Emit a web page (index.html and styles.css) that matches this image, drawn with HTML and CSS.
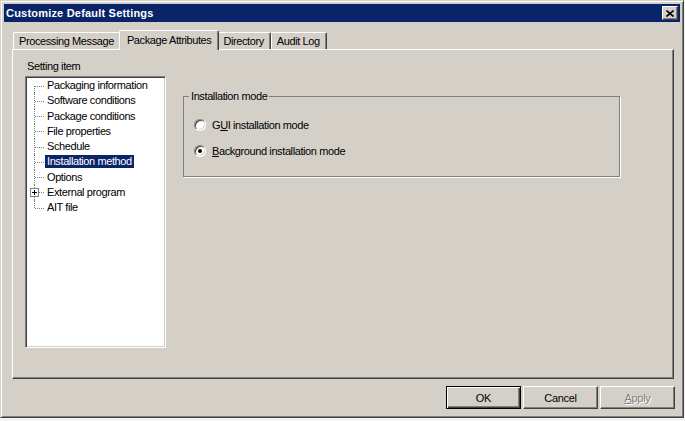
FILE: index.html
```html
<!DOCTYPE html>
<html lang="en">
<head>
  <meta charset="UTF-8">
  <title>Customize Default Settings</title>
  <link rel="stylesheet" href="styles.css">
</head>
<body>
  <div class="window">
    <div class="titlebar">
      <span class="title">Customize Default Settings</span>
      <button class="close-btn">
        <svg width="8" height="7" viewBox="0 0 8 7"><path d="M0.5 0.5 L7.5 6.5 M7.5 0.5 L0.5 6.5" stroke="#000" stroke-width="1.6"/></svg>
      </button>
    </div>

    <div class="tabs">
      <div class="tab">Processing Message</div>
      <div class="tab active">Package Attributes</div>
      <div class="tab">Directory</div>
      <div class="tab">Audit Log</div>
    </div>

    <div class="panel">
      <div class="left-col">
        <div class="caption">Setting item</div>
        <div class="tree">
          <div class="node"><span class="branch"></span><span class="label">Packaging information</span></div>
          <div class="node"><span class="branch"></span><span class="label">Software conditions</span></div>
          <div class="node"><span class="branch"></span><span class="label">Package conditions</span></div>
          <div class="node"><span class="branch"></span><span class="label">File properties</span></div>
          <div class="node"><span class="branch"></span><span class="label">Schedule</span></div>
          <div class="node"><span class="branch"></span><span class="label selected">Installation method</span></div>
          <div class="node"><span class="branch"></span><span class="label">Options</span></div>
          <div class="node">
            <span class="branch">
              <span class="plus"><svg width="7" height="7" viewBox="0 0 7 7"><path d="M1 3.5 H6 M3.5 1 V6" stroke="#000" stroke-width="1"/></svg></span>
            </span>
            <span class="label">External program</span>
          </div>
          <div class="node"><span class="branch"></span><span class="label">AIT file</span></div>
        </div>
      </div>

      <fieldset class="group">
        <legend>Installation mode</legend>
        <label class="radio"><span class="circle"></span>G<u>U</u>I installation mode</label>
        <label class="radio"><span class="circle checked"></span><u>B</u>ackground installation mode</label>
      </fieldset>
    </div>

    <div class="buttons">
      <button class="btn default">OK</button>
      <button class="btn">Cancel</button>
      <button class="btn disabled"><u>A</u>pply</button>
    </div>
  </div>
</body>
</html>
```

FILE: styles.css
```css
body {
  margin: 0;
  background: #f4f4f4;
  font-family: "Liberation Sans", Arial, sans-serif;
  font-size: 11px;
  color: #000;
}

.window {
  width: 684px;
  height: 418px;
  box-sizing: border-box;
  padding: 3px;
  background: #d4d0c8;
  border: 1px solid;
  border-color: #d4d0c8 #404040 #404040 #d4d0c8;
  box-shadow: inset 1px 1px #fff, inset -1px -1px #808080;
}

/* title bar */
.titlebar {
  height: 18px;
  background: #0a246a;
  display: flex;
  align-items: center;
  justify-content: space-between;
  padding: 0 2px;
}
.title {
  color: #fff;
  font-weight: bold;
  letter-spacing: 0.2px;
}
.close-btn {
  width: 16px;
  height: 14px;
  padding: 0;
  background: #d4d0c8;
  border: 1px solid;
  border-color: #fff #404040 #404040 #fff;
  box-shadow: inset -1px -1px #808080;
  display: flex;
  align-items: center;
  justify-content: center;
}

/* tabs */
.tabs {
  display: flex;
  align-items: flex-end;
  height: 19px;
  margin: 8px 0 0 9px;
  letter-spacing: -0.4px;
}
.tab {
  height: 17px;
  box-sizing: border-box;
  padding: 0 6px 0 5px;
  line-height: 16px;
  border-left: 1px solid #fff;
  border-top: 1px solid #fff;
  border-right: 1px solid #404040;
  box-shadow: inset -1px 0 #808080;
  border-radius: 2px 2px 0 0;
  white-space: nowrap;
}
.tab.active {
  height: 20px;
  margin: 0 -2px -1px;
  padding: 0 7px 0 7px;
  line-height: 18px;
  position: relative;
  z-index: 1;
  background: #d4d0c8;
}

/* panel */
.panel {
  width: 662px;
  height: 330px;
  box-sizing: border-box;
  margin-left: 8px;
  padding: 10px 0 0 12px;
  border: 1px solid;
  border-color: #fff #404040 #404040 #fff;
  box-shadow: inset -1px -1px #808080;
  display: flex;
  align-items: flex-start;
  letter-spacing: -0.4px;
}
.caption {
  line-height: 13px;
  padding-left: 2px;
}
.tree {
  width: 141px;
  height: 272px;
  box-sizing: border-box;
  margin-top: 3px;
  padding-top: 1px;
  background: #fff;
  border: 1px solid;
  border-color: #808080 #fff #fff #808080;
  box-shadow: inset 1px 1px #404040, inset -1px -1px #d4d0c8;
}
.node {
  height: 15.25px;
  display: flex;
  align-items: center;
}
.branch {
  width: 19px;
  align-self: stretch;
  position: relative;
  flex-shrink: 0;
}
.branch::before {
  content: "";
  position: absolute;
  left: 8px;
  top: 0;
  bottom: 0;
  border-left: 1px dotted #808080;
}
.node:first-child .branch::before {
  top: 50%;
}
.node:last-child .branch::before {
  bottom: 50%;
}
.branch::after {
  content: "";
  position: absolute;
  left: 9px;
  right: 1px;
  top: 50%;
  border-top: 1px dotted #808080;
}
.plus {
  position: absolute;
  left: 4px;
  top: 3px;
  width: 9px;
  height: 9px;
  box-sizing: border-box;
  background: #fff;
  border: 1px solid #808080;
  z-index: 1;
  display: flex;
}
.label {
  padding: 0 2px;
  line-height: 13px;
  white-space: nowrap;
}
.label.selected {
  background: #0a246a;
  color: #fff;
}

/* group box */
.group {
  width: 437px;
  box-sizing: border-box;
  margin: 30px 0 0 17px;
  padding: 14px 10px 17px 10px;
  border: 1px solid #808080;
  box-shadow: 1px 1px 0 #fff;
  min-width: 0;
}
.group legend {
  padding: 0 2px;
  margin-left: -5px;
  line-height: 13px;
}
.radio {
  display: flex;
  align-items: center;
  height: 16px;
}
.radio + .radio {
  margin-top: 10px;
}
.circle {
  width: 12px;
  height: 12px;
  box-sizing: border-box;
  margin-right: 6px;
  border-radius: 50%;
  border: 1px solid;
  border-color: #808080 #fff #fff #808080;
  box-shadow: inset 1px 1px #404040, inset -1px -1px #d4d0c8;
  background: #fff;
  position: relative;
}
.circle.checked::after {
  content: "";
  position: absolute;
  left: 3px;
  top: 3px;
  width: 4px;
  height: 4px;
  border-radius: 50%;
  background: #000;
}

/* dialog buttons */
.buttons {
  display: flex;
  justify-content: flex-end;
  gap: 2px;
  margin-top: 7px;
  padding-right: 5px;
}
.btn {
  width: 75px;
  height: 23px;
  padding: 0;
  font-family: "Liberation Sans", Arial, sans-serif;
  font-size: 11px;
  letter-spacing: -0.3px;
  color: #000;
  background: #d4d0c8;
  border: 1px solid;
  border-color: #fff #404040 #404040 #fff;
  box-shadow: inset -1px -1px #808080;
}
.btn.default {
  border-color: #000;
  box-shadow: inset 1px 1px #fff, inset -1px -1px #404040, inset -2px -2px #808080;
}
.btn.disabled {
  color: #808080;
  text-shadow: 1px 1px #fff;
}
```
